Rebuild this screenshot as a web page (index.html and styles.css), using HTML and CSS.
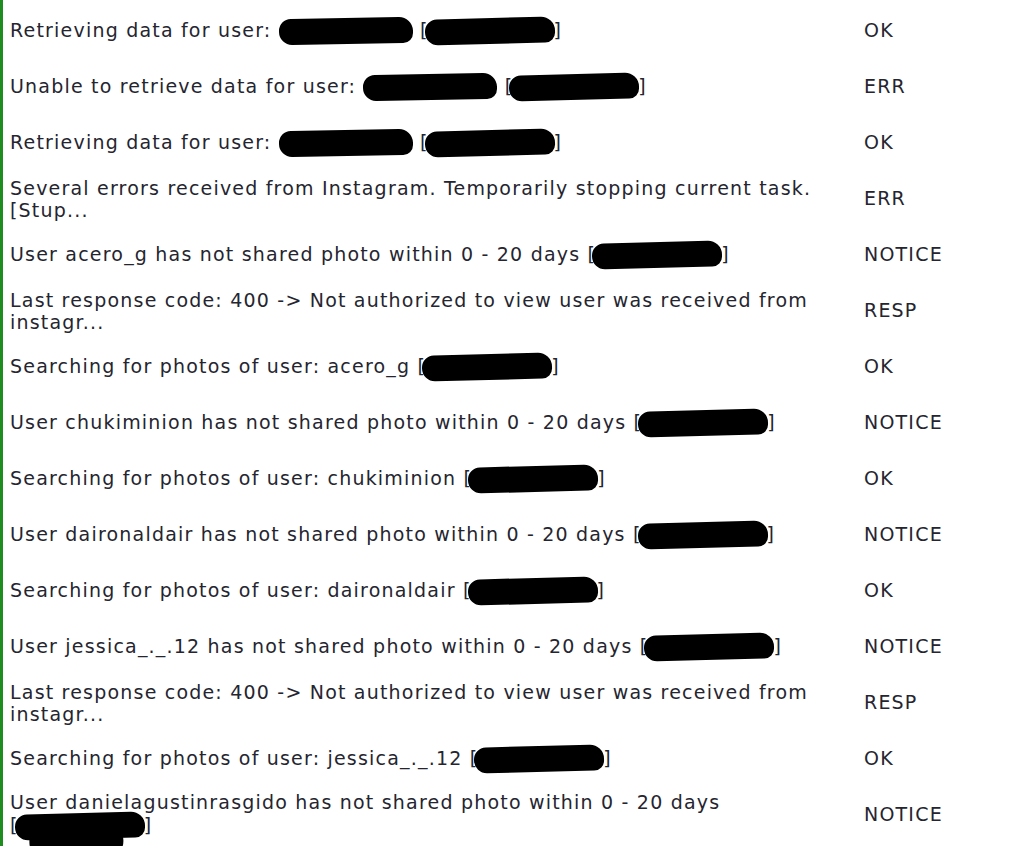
FILE: index.html
```html
<!DOCTYPE html>
<html>
<head>
<meta charset="utf-8">
<link rel="stylesheet" href="styles.css">
</head>
<body>
<div class="log">
  <div class="row"><div class="msg">Retrieving data for user: <span class="blob b1"></span> [<span class="blob b2"></span>]</div><div class="st">OK</div></div>
  <div class="row"><div class="msg">Unable to retrieve data for user: <span class="blob b1"></span> [<span class="blob b2"></span>]</div><div class="st">ERR</div></div>
  <div class="row"><div class="msg">Retrieving data for user: <span class="blob b1"></span> [<span class="blob b2"></span>]</div><div class="st">OK</div></div>
  <div class="row"><div class="msg">Several errors received from Instagram. Temporarily stopping current task. [Stup...</div><div class="st">ERR</div></div>
  <div class="row"><div class="msg">User acero_g has not shared photo within 0 - 20 days [<span class="blob b2"></span>]</div><div class="st">NOTICE</div></div>
  <div class="row"><div class="msg">Last response code: 400 -&gt; Not authorized to view user was received from instagr...</div><div class="st">RESP</div></div>
  <div class="row"><div class="msg">Searching for photos of user: acero_g [<span class="blob b2"></span>]</div><div class="st">OK</div></div>
  <div class="row"><div class="msg">User chukiminion has not shared photo within 0 - 20 days [<span class="blob b2"></span>]</div><div class="st">NOTICE</div></div>
  <div class="row"><div class="msg">Searching for photos of user: chukiminion [<span class="blob b2"></span>]</div><div class="st">OK</div></div>
  <div class="row"><div class="msg">User daironaldair has not shared photo within 0 - 20 days [<span class="blob b2"></span>]</div><div class="st">NOTICE</div></div>
  <div class="row"><div class="msg">Searching for photos of user: daironaldair [<span class="blob b2"></span>]</div><div class="st">OK</div></div>
  <div class="row"><div class="msg">User jessica_._.12 has not shared photo within 0 - 20 days [<span class="blob b2"></span>]</div><div class="st">NOTICE</div></div>
  <div class="row"><div class="msg">Last response code: 400 -&gt; Not authorized to view user was received from instagr...</div><div class="st">RESP</div></div>
  <div class="row"><div class="msg">Searching for photos of user: jessica_._.12 [<span class="blob b2"></span>]</div><div class="st">OK</div></div>
  <div class="row"><div class="msg">User danielagustinrasgido has not shared photo within 0 - 20 days <span class="nowrap">[<span class="blob b2 tail"></span>]</span></div><div class="st">NOTICE</div></div>
</div>
</body>
</html>
```
FILE: styles.css
```css
html, body {
  margin: 0;
  padding: 0;
  background: #ffffff;
}
body {
  font-family: "DejaVu Sans", Verdana, sans-serif;
  font-size: 19px;
  letter-spacing: 1.2px;
  line-height: 22px;
  color: #25252f;
  overflow: hidden;
}
.log {
  border-left: 3px solid #1e8c1e;
  padding: 2px 0 4px 0;
}
.row {
  display: grid;
  grid-template-columns: 854px 1fr;
  height: 56px;
  align-items: center;
}
.msg {
  padding: 1px 10px 0 7px;
}
.st {
  padding-left: 7px;
}
.nowrap {
  white-space: nowrap;
}
.blob {
  display: inline-block;
  position: relative;
  height: 26px;
  background: #000;
  border-radius: 12px 14px 10px 13px;
  vertical-align: -7px;
}
.b1 {
  width: 134px;
  transform: rotate(-1deg);
}
.b2 {
  width: 130px;
  margin-left: -4px;
  margin-right: -1px;
  transform: rotate(-1.5deg);
}
.tail::after {
  content: "";
  position: absolute;
  left: 14px;
  top: 14px;
  width: 94px;
  height: 34px;
  background: #000;
  border-radius: 20px 30px 40px 40px;
}
```
